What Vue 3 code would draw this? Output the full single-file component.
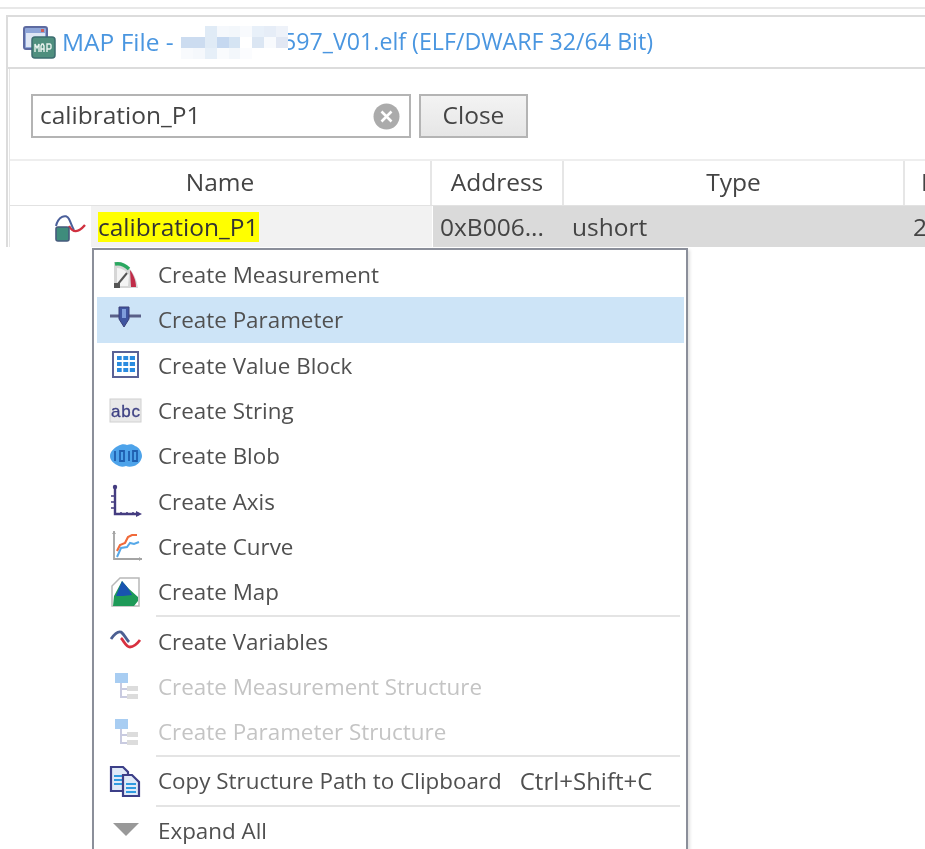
<template>
  <div class="page">
    <div class="top-line"></div>
    <div class="map-window">
      <header class="title-bar">
        <svg class="map-icon" width="33" height="33" viewBox="0 0 33 33">
          <rect x="1" y="1" width="23" height="22" rx="2" fill="#8fa6d8" stroke="#5d6aa0" stroke-width="2" />
          <rect x="3" y="7" width="19" height="14" fill="#dfe7f5" />
          <rect x="18" y="3" width="3" height="3" fill="#d0605a" />
          <rect x="9" y="11" width="23" height="21" rx="3" fill="#4f8f7e" stroke="#3c6d70" stroke-width="1.5" />
          <path d="M12 26v-8l2 4 2-4v8M18 26v-6l1-2h1l1 2v6M18 23h3M24 26v-8h3l1 1v3l-1 1h-3" fill="none" stroke="#e8f3ee" stroke-width="1.4" />
        </svg>
        <span class="title-text">MAP File - </span>
        <span class="mosaic">
          <i v-for="(c, i) in mosaicCells" :key="i" :style="{ background: c }"></i>
        </span>
        <span class="title-text title-file">597_V01.elf (ELF/DWARF 32/64 Bit)</span>
      </header>

      <div class="content">
        <div class="search-row">
          <div class="search-box">
            <span class="search-text">calibration_P1</span>
            <svg class="clear-icon" width="27" height="27" viewBox="0 0 27 27">
              <circle cx="13.5" cy="13.5" r="13" fill="#ababab" />
              <path d="M8.5 8.5l10 10M18.5 8.5l-10 10" stroke="#fff" stroke-width="2.6" />
            </svg>
          </div>
          <button type="button" class="close-btn"><span class="search-text">Close</span></button>
        </div>

        <div class="table-head">
          <div class="th th-name">Name</div>
          <div class="th th-address">Address</div>
          <div class="th th-type">Type</div>
          <div class="th th-extra">B</div>
        </div>
        <div class="table-row">
          <div class="row-icon">
            <svg width="32" height="30" viewBox="0 0 32 30">
              <path d="M2 13C4 4 12 0 15 6c2 4 3 8 5 11" fill="none" stroke="#4a5f9a" stroke-width="2" />
              <path d="M15 13c4 7 9 7 16-1" fill="none" stroke="#d0303f" stroke-width="2.4" />
              <rect x="2" y="14" width="13" height="14" rx="2" fill="#3f8c7c" stroke="#465a7c" stroke-width="1.6" />
            </svg>
          </div>
          <div class="cell-name"><mark>calibration_P1</mark></div>
          <div class="cell-rest">
            <div class="cell-address">0xB006...</div>
            <div class="cell-type">ushort</div>
            <div class="cell-extra">2</div>
          </div>
        </div>
      </div>
    </div>

    <div class="context-menu">
      <template v-for="item in menuItems" :key="item.label">
        <div v-if="item.sep" class="menu-sep"></div>
        <div v-else :class="['menu-item', { active: item.active, disabled: item.disabled }]">
          <svg class="menu-icon" width="34" height="34" viewBox="0 0 34 34" v-html="item.icon"></svg>
          <span class="menu-label">{{ item.label }}</span>
          <span v-if="item.shortcut" class="menu-shortcut">{{ item.shortcut }}</span>
        </div>
      </template>
    </div>
  </div>
</template>

<script setup>
// blurred-out part of the file name, three rows of nine cells
const mosaicCells = [
  '#fff', '#fff', '#e0ebf6', '#f5f8fc', '#f3f7fb', '#f8fafd', '#e8f0f9', '#e6edf7', '#eef2f9',
  '#ccdcf0', '#ccdcf0', '#e0ebf6', '#c5d8f0', '#d5e4f3', '#fff', '#dbe6f3', '#f8fafd', '#e1e7f3',
  '#f8fafd', '#f5f8fc', '#e6eff8', '#f9fbfd', '#f3f7fb', '#fbfcfe', '#fff', '#fff', '#fff'
]

const treeIcon = `<rect x="6" y="4" width="13" height="10" fill="#a8cdf2"/><path d="M12 14v15M12 20h6M12 28h6" stroke="#c9cbe0" stroke-width="2" fill="none"/><rect x="18" y="17" width="11" height="5" fill="#dcdcdc"/><rect x="18" y="25" width="11" height="5" fill="#dcdcdc"/>`

const menuItems = [
  {
    label: 'Create Measurement',
    icon: `<path d="M5 4c11 0 21 8 24 26H5z" fill="#d6d6d6"/><path d="M8 10c5 0 9 3 12 7l-1 11H8z" fill="#f4f4f4"/><path d="M6 6c5-1 10 1 14 5" stroke="#2aa860" stroke-width="3.4" fill="none"/><path d="M21 12c3 4 6 10 6 17h-5z" fill="#c02c48"/><path d="M9 26l9-11" stroke="#555" stroke-width="2"/><rect x="5" y="25" width="6" height="5" fill="#555"/>`
  },
  {
    label: 'Create Parameter',
    active: true,
    icon: `<path d="M1 13h31" stroke="#5a6088" stroke-width="3"/><path d="M10 4h10v12l-5 8-5-8z" fill="#3f55a0" stroke="#3a3f78"/><rect x="13" y="6" width="4" height="9" fill="#7f9ddb"/>`
  },
  {
    label: 'Create Value Block',
    icon: `<rect x="4" y="4" width="25" height="25" fill="#fff" stroke="#5a6296" stroke-width="2"/><path d="M8 8h18v4H8zM8 14h18v4H8zM8 20h18v4H8z" fill="#2a8be0"/><path d="M13.5 8v16M20 8v16" stroke="#fff" stroke-width="1.6"/>`
  },
  {
    label: 'Create String',
    icon: `<rect x="1" y="5" width="31" height="23" fill="#e9e9e9" stroke="#d0d0d0"/><text x="2" y="23" font-family="Liberation Sans, sans-serif" font-size="17" fill="#3f4284" stroke="#3f4284" stroke-width="0.3" textLength="29">abc</text>`
  },
  {
    label: 'Create Blob',
    icon: `<path d="M9 7c3-2 7-2 9-1 3-1 6-1 8 1 4 1 7 6 7 10s-4 9-8 10c-3 1-6 1-8 0-3 1-6 1-9-1-4-2-7-5-7-9s4-8 8-10z" fill="#4da3ea"/><path d="M6 12v10M11 12h4v10h-4zM20 12v10M24 12h4v10h-4z" stroke="#1f5fb0" stroke-width="1.8" fill="none"/>`
  },
  {
    label: 'Create Axis',
    icon: `<path d="M6 3v27h24" stroke="#443c80" stroke-width="2.4" fill="none"/><path d="M2 12h4M2 18h4M2 24h4M12 28v3M18 28v3M24 28v3" stroke="#443c80" stroke-width="1.5"/><circle cx="6" cy="3" r="2.2" fill="#443c80"/><path d="M27 27l6 3-6 3z" fill="#443c80"/>`
  },
  {
    label: 'Create Curve',
    icon: `<path d="M5 2v28h28" stroke="#a4a4a4" stroke-width="1.8" fill="none"/><path d="M3 5l2-3 2 3zM30 28l3 2-3 2z" fill="#a4a4a4"/><path d="M8 22l3-6 5-2 3-6 4-2h5" stroke="#f06a3a" stroke-width="2.2" fill="none"/><path d="M8 28l4-9 6-1 3-4 4 1 5-2" stroke="#56a8e8" stroke-width="2" fill="none"/>`
  },
  {
    label: 'Create Map',
    icon: `<path d="M3 31V11l8-8h19v28z" fill="#fff" stroke="#b8b8b8" stroke-width="1.5"/><path d="M5 21l8-15 6 7 10 9v4l-4 5H4z" fill="#1e9a58"/><path d="M7 21l6-15 6 7 4 7-9 1z" fill="#1854b0"/>`
  },
  { sep: true, label: 'sep1' },
  {
    label: 'Create Variables',
    icon: `<path d="M2 15c4-6 7-8 10-7 3 2 5 7 8 10" stroke="#4c5f92" stroke-width="2.8" fill="none"/><path d="M12 14c3 3 5 9 9 9 3 0 7-3 10-7" stroke="#d8303f" stroke-width="2.8" fill="none"/>`
  },
  { label: 'Create Measurement Structure', disabled: true, icon: treeIcon },
  { label: 'Create Parameter Structure', disabled: true, icon: treeIcon },
  { sep: true, label: 'sep2' },
  {
    label: 'Copy Structure Path to Clipboard',
    shortcut: 'Ctrl+Shift+C',
    icon: `<path d="M2 3h12l5 5v19H2z" fill="#dfeaf8" stroke="#3c3f88" stroke-width="2.2"/><path d="M5 12h10M5 16h10M5 20h10" stroke="#2f9be0" stroke-width="2"/><path d="M14 11h9l7 7v14H14z" fill="#dfeaf8" stroke="#3c3f88" stroke-width="2.2"/><path d="M17 20h10M17 24h10M17 28h10" stroke="#2f9be0" stroke-width="2"/>`
  },
  { sep: true, label: 'sep3' },
  {
    label: 'Expand All',
    icon: `<path d="M4 10h26L17 23z" fill="#999"/>`
  }
]
</script>

<style scoped>
.page {
  position: relative;
  width: 925px;
  height: 849px;
  overflow: hidden;
  background: #fff;
  padding-top: 7px;
  box-sizing: border-box;
  font-family: "Open Sans", "Liberation Sans", sans-serif;
  font-size: 24.5px;
  color: #444;
  filter: blur(0.45px);
}

.top-line {
  height: 2px;
  background: #e8e8e8;
}

.map-window {
  margin: 6px 0 0 6px;
  border-top: 2px solid #dcdcdc;
  border-left: 2px solid #dcdcdc;
}

.title-bar {
  height: 50px;
  display: flex;
  align-items: center;
  padding-left: 15px;
  border-bottom: 2px solid #dcdcdc;
  white-space: pre;
}

.map-icon {
  flex-shrink: 0;
  margin-top: 1px;
  margin-right: 6px;
}

.title-text {
  color: #4a96e0;
  padding-bottom: 2px;
}

.title-file {
  font-size: 23.2px;
}

.mosaic {
  position: relative;
  z-index: 1;
  display: grid;
  grid-template-columns: repeat(9, 11.9px);
  grid-auto-rows: 11px;
  flex-shrink: 0;
  margin-left: 1px;
  margin-right: -5px;
}

.content {
  margin-left: 1px;
  border-left: 1px solid #e6e6e6;
}

.search-row {
  display: flex;
  gap: 8px;
  padding: 25px 0 21px 21px;
  border-bottom: 2px solid #eeeeee;
}

.search-box {
  box-sizing: border-box;
  width: 380px;
  height: 44px;
  display: flex;
  align-items: center;
  justify-content: space-between;
  padding: 0 9px 0 7px;
  border: 2px solid #b4b4b4;
  color: #444;
}

.search-text {
  position: relative;
  top: -2px;
}

.close-btn {
  box-sizing: border-box;
  width: 109px;
  height: 44px;
  padding: 0;
  border: 2px solid #b4b4b4;
  background: linear-gradient(#f3f3f3, #e6e6e6);
  font: inherit;
  color: #444;
}

.table-head {
  display: flex;
  height: 44px;
  border-bottom: 1px solid #e2e2e2;
}

.th {
  display: flex;
  align-items: center;
  justify-content: center;
  box-sizing: border-box;
  padding-bottom: 3px;
  border-right: 2px solid #e6e6e6;
}

.th-name {
  width: 422px;
}

.th-address {
  width: 132px;
}

.th-type {
  width: 341px;
}

.th-extra {
  flex: 1;
  border-right: none;
  overflow: hidden;
  justify-content: flex-start;
  padding-left: 16px;
}

.table-row {
  display: flex;
  height: 41px;
}

.row-icon {
  width: 81px;
  box-sizing: border-box;
  padding: 7px 0 0 44px;
  flex-shrink: 0;
}

.cell-name {
  box-sizing: border-box;
  width: 341px;
  flex-shrink: 0;
  background: #f2f2f2;
  padding-left: 7px;
  display: flex;
  align-items: center;
  height: 41px;
}

mark {
  background: #ffff00;
  color: #333;
  line-height: 30px;
}

.cell-rest {
  flex: 1;
  display: flex;
  align-items: center;
  background: #dadada;
  margin-left: 1px;
  overflow: hidden;
}

.cell-address {
  width: 131px;
  flex-shrink: 0;
  box-sizing: border-box;
  padding-left: 7px;
  white-space: nowrap;
}

.cell-type {
  width: 341px;
  flex-shrink: 0;
  box-sizing: border-box;
  padding-left: 8px;
}

.cell-extra {
  padding-left: 8px;
}

.context-menu {
  position: absolute;
  left: 92px;
  top: 248px;
  box-sizing: border-box;
  width: 596px;
  height: 640px;
  padding: 2px 2px 0 3px;
  background: #fff;
  border: 2px solid #8b8f9a;
  box-shadow: 2px 2px 3px rgba(0, 0, 0, 0.12);
  font-size: 22.4px;
}

.menu-item {
  height: 45.3px;
  display: flex;
  align-items: center;
  padding-left: 12px;
  white-space: nowrap;
  color: #505050;
}

.menu-item.active {
  background: #cde4f7;
}

.menu-item.disabled {
  color: #c4c4c4;
}

.menu-icon {
  flex-shrink: 0;
  margin-right: 15px;
}

.menu-shortcut {
  margin-left: 18px;
  font-size: 24px;
}

.menu-sep {
  height: 2px;
  margin: 1px 4px 1px 59px;
  background: #e4e4e4;
}
</style>

<style>
html,
body {
  margin: 0;
  background: #fff;
}
</style>
